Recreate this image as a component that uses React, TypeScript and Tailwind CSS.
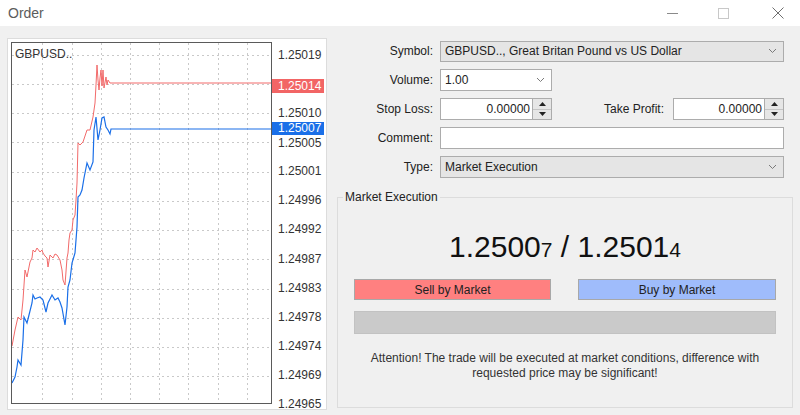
const red: [number, number][] = [
  [12, 346], [15, 330], [18, 317], [21, 320], [23, 300], [25, 270], [27, 277], [28, 272],
  [30, 262], [32, 258], [33, 250], [35, 252], [37, 248], [40, 252], [42, 250], [43, 253],
  [45, 256], [47, 258], [48, 267], [50, 255], [53, 258], [55, 254], [57, 255], [60, 260],
  [62, 270], [63, 280], [65, 285], [67, 258], [68, 253], [69, 240], [70, 233], [72, 230],
  [73, 220], [75, 215], [76, 200], [77, 183], [78, 143], [80, 145], [83, 142], [85, 136],
  [87, 130], [90, 130], [93, 117], [95, 103], [96, 85], [97, 65], [98, 80], [99, 90],
  [100, 78], [101, 70], [102, 86], [103, 70], [104, 88], [106, 77], [107, 85], [108, 80],
  [110, 83], [272, 83],
];

const blue: [number, number][] = [
  [12, 383], [15, 377], [17, 367], [18, 360], [21, 365], [23, 340], [24, 317], [27, 323],
  [29, 315], [32, 303], [33, 295], [35, 299], [37, 298], [40, 297], [43, 300], [46, 312],
  [48, 303], [50, 299], [52, 295], [55, 300], [58, 298], [60, 302], [62, 308], [65, 325],
  [67, 307], [68, 287], [70, 280], [72, 263], [75, 253], [76, 240], [77, 227], [78, 197],
  [80, 195], [82, 190], [84, 178], [87, 163], [90, 170], [93, 162], [94, 130], [96, 117],
  [98, 140], [100, 130], [102, 118], [104, 117], [106, 127], [108, 130], [110, 134],
  [111, 129], [272, 129],
];

// 1.25014 sits under the red ask label, so it is left out of the axis
const axis = [
  "1.25019", "", "1.25010", "1.25005", "1.25001", "1.24996", "1.24992",
  "1.24987", "1.24983", "1.24978", "1.24974", "1.24969", "1.24965",
];

const hLines = [55, 84, 113, 142, 172, 201, 230, 259, 289, 318, 347, 376];
const vLines = [42, 72, 101, 130, 159, 188, 218, 247];

function Chevron() {
  return (
    <svg width="9" height="6" viewBox="0 0 9 6" className="shrink-0">
      <polyline points="1,1 4.5,4.5 8,1" fill="none" stroke="#7a7a7a" strokeWidth="1" />
    </svg>
  );
}

function Spinner() {
  return (
    <div className="flex h-[22px] w-[19px] flex-col border border-l-0 border-[#acacac] bg-[#e6e6e6]">
      <div className="flex flex-1 items-center justify-center border-b border-[#c4c4c4]">
        <svg width="7" height="4" viewBox="0 0 7 4">
          <polygon points="0,4 3.5,0 7,4" fill="#222" />
        </svg>
      </div>
      <div className="flex flex-1 items-center justify-center">
        <svg width="7" height="4" viewBox="0 0 7 4">
          <polygon points="0,0 3.5,4 7,0" fill="#222" />
        </svg>
      </div>
    </div>
  );
}

function Row({ label, children }: { label: string; children: React.ReactNode }) {
  return (
    <div className="flex h-[22px] items-center gap-[7px]">
      <span className="w-[96px] text-right">{label}</span>
      {children}
    </div>
  );
}

function Chart() {
  return (
    <div className="relative h-[372px] w-[320px] border border-[#dcdcdc] bg-white pl-[3px] pt-[3px]">
      <div className="relative h-[362px] w-[261px]">
        <svg width="261" height="362" viewBox="11 42 261 362" className="absolute inset-0">
          {hLines.map((y) => (
            <line key={"h" + y} x1="12" x2="271" y1={y + 0.5} y2={y + 0.5} stroke="#c9c9c9" strokeDasharray="2 3" />
          ))}
          {vLines.map((x) => (
            <line key={"v" + x} x1={x + 0.5} x2={x + 0.5} y1="43" y2="403" stroke="#c9c9c9" strokeDasharray="2 3" />
          ))}
          <polyline points={red.map((p) => p.join(",")).join(" ")} fill="none" stroke="#f26a6a" strokeWidth="1" />
          <polyline points={blue.map((p) => p.join(",")).join(" ")} fill="none" stroke="#1a6fe8" strokeWidth="1.2" />
          <rect x="11.5" y="42.5" width="260" height="361" fill="none" stroke="#5a5a5a" />
        </svg>
        <span className="absolute left-[4px] top-[3px] text-[12px] text-[#333]">GBPUSD..</span>
      </div>
      {axis.map((v, i) =>
        v ? (
          <span
            key={v}
            className="absolute left-[270px] text-[12px] leading-[14px] text-[#333]"
            style={{ top: 55 - 39 - 7 + i * 29.08 + (i === 3 ? 1 : 0) }}
          >
            {v}
          </span>
        ) : null
      )}
      <span className="absolute left-[264px] top-[40px] w-[52px] bg-[#f26565] pl-[6px] text-[12px] leading-[14px] text-white">
        1.25014
      </span>
      <span className="absolute left-[264px] top-[83px] w-[52px] bg-[#1a6fe8] pl-[6px] text-[12px] leading-[13px] text-white">
        1.25007
      </span>
    </div>
  );
}

export default function App() {
  return (
    <div className="flex h-[415px] w-[800px] flex-col overflow-hidden bg-[#f0f0f0] font-['Liberation_Sans',Arial,sans-serif] text-[12px] text-[#222]">
      <div className="flex h-[26px] items-center bg-white pl-[8px]">
        <span className="text-[14px] text-[#5c5c5c]">Order</span>
        <div className="ml-auto flex items-center">
          <div className="h-px w-[11px] bg-[#8a8a8a]" />
          <div className="ml-[40px] h-[11px] w-[11px] border border-[#c8c8c8]" />
          <svg width="12" height="12" viewBox="0 0 12 12" className="ml-[43px] mr-[16px]">
            <path d="M0.5 0.5 L11.5 11.5 M11.5 0.5 L0.5 11.5" stroke="#6e6e6e" strokeWidth="1" />
          </svg>
        </div>
      </div>

      <div className="flex flex-1 pl-[7px] pt-[12px]">
        <Chart />

        <div className="ml-[10px] flex w-[456px] flex-col">
          <div className="mt-[2px] flex flex-col gap-[7px] pr-[9px]">
            <Row label="Symbol:">
              <div className="flex h-[21px] flex-1 items-center justify-between border border-[#acacac] bg-[#e5e5e5] pl-[4px] pr-[6px]">
                <span>GBPUSD.., Great Britan Pound vs US Dollar</span>
                <Chevron />
              </div>
            </Row>
            <Row label="Volume:">
              <div className="flex h-[22px] w-[112px] items-center justify-between border border-[#acacac] bg-white pl-[4px] pr-[6px]">
                <span>1.00</span>
                <Chevron />
              </div>
            </Row>
            <Row label="Stop Loss:">
              <div className="flex">
                <div className="flex h-[22px] w-[93px] items-center justify-end border border-[#acacac] bg-white pr-[2px]">
                  0.00000
                </div>
                <Spinner />
              </div>
              <span className="flex-1 pr-[1px] text-right">Take Profit:</span>
              <div className="ml-[1px] flex">
                <div className="flex h-[22px] w-[92px] items-center justify-end border border-[#acacac] bg-white pr-[2px]">
                  0.00000
                </div>
                <Spinner />
              </div>
            </Row>
            <Row label="Comment:">
              <div className="h-[22px] flex-1 border border-[#acacac] bg-white" />
            </Row>
            <Row label="Type:">
              <div className="flex h-[22px] flex-1 items-center justify-between border border-[#acacac] bg-[#e5e5e5] pl-[4px] pr-[6px]">
                <span>Market Execution</span>
                <Chevron />
              </div>
            </Row>
          </div>

          <fieldset className="mt-[12px] h-[218px] border border-[#dcdcdc]">
            <legend className="ml-[5px] px-[2px] leading-[14px]">Market Execution</legend>
            <div className="flex flex-col items-center px-[16px]">
              <div className="mt-[25px] text-[30px] leading-[36px] text-[#111]">
                1.2500<span className="text-[21px]">7</span> / 1.2501<span className="text-[21px]">4</span>
              </div>
              <div className="mt-[11px] flex w-full justify-between">
                <div className="flex h-[21px] w-[197px] items-center justify-center border border-[#a8a8a8] bg-[#ff8080]">
                  Sell by Market
                </div>
                <div className="flex h-[21px] w-[198px] items-center justify-center border border-[#a8a8a8] bg-[#9fbcfb]">
                  Buy by Market
                </div>
              </div>
              <div className="mt-[11px] h-[23px] w-full border border-[#c2c2c2] bg-[#cacaca]" />
              <p className="mt-[17px] text-center leading-[15px] text-[#333]">
                Attention! The trade will be executed at market conditions, difference with
                <br />
                requested price may be significant!
              </p>
            </div>
          </fieldset>
        </div>
      </div>
    </div>
  );
}
